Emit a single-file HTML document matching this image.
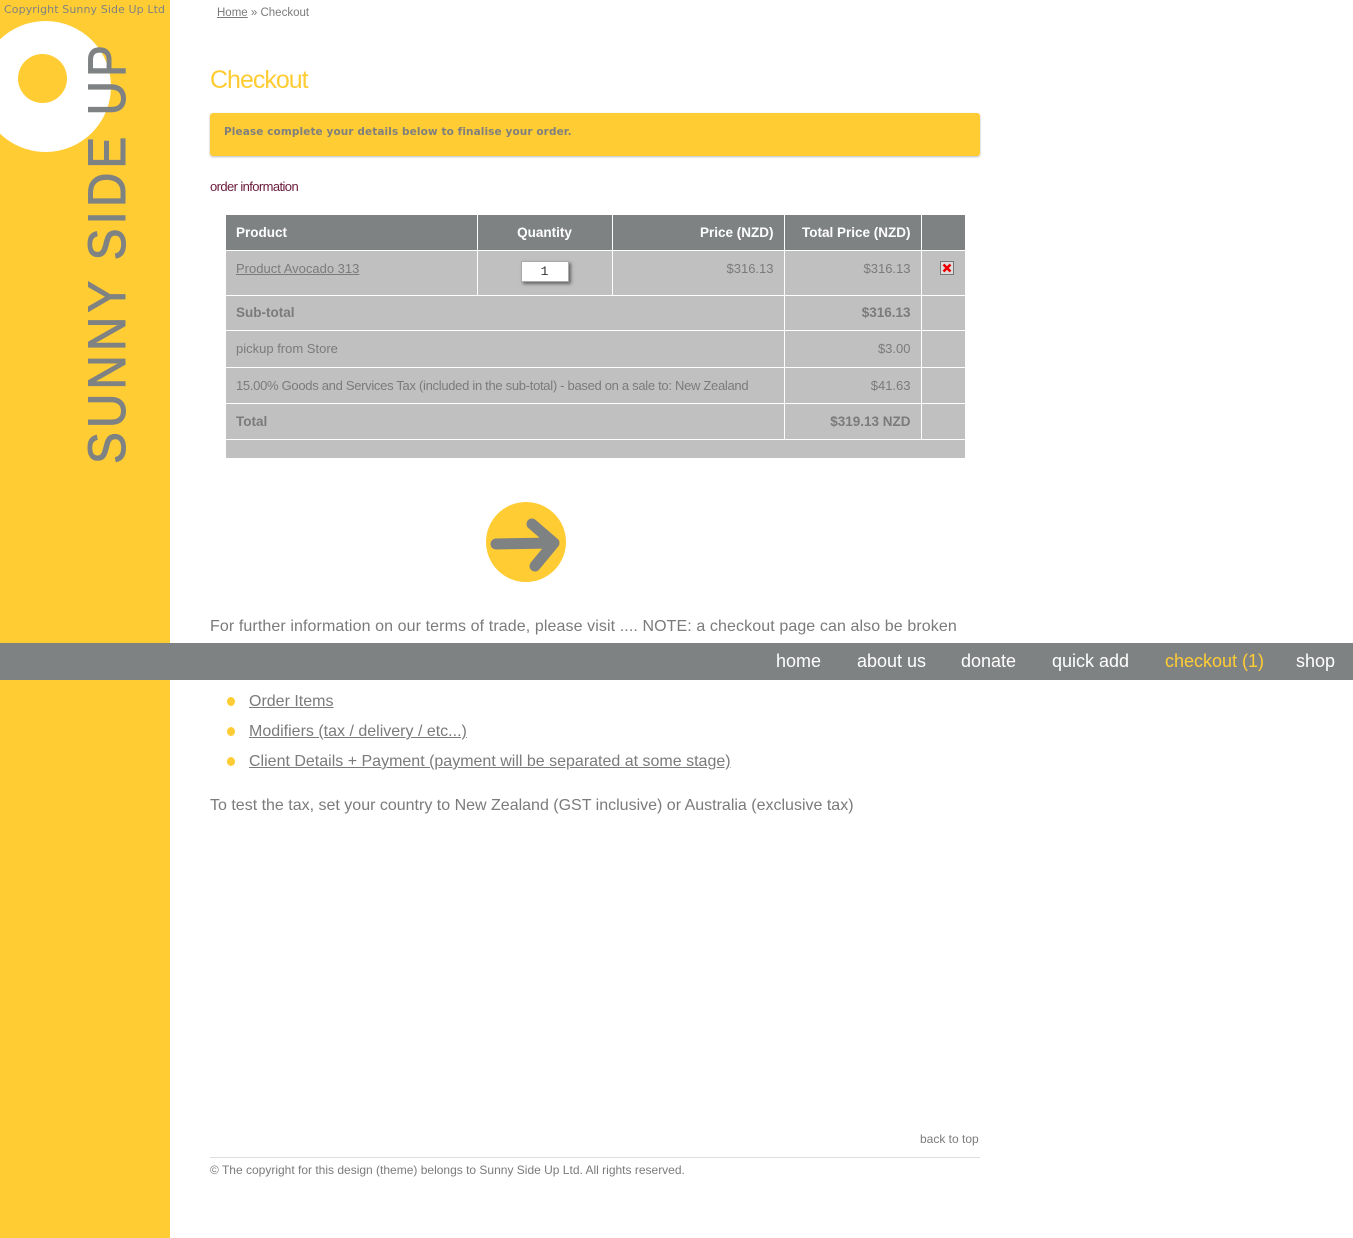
<!DOCTYPE html>
<html><head><meta charset="utf-8"><style>
*{margin:0;padding:0;box-sizing:border-box}
body{width:1353px;height:1238px;position:relative;background:#fff;font-family:"Liberation Sans",sans-serif;color:#7b7b7b;overflow:hidden}
#side{position:absolute;left:0;top:0;width:170px;height:1238px;background:#ffcc33;overflow:hidden}
#copy{position:absolute;left:4px;top:3px;font-family:"DejaVu Sans",sans-serif;font-size:11px;color:#7f8282;white-space:nowrap;letter-spacing:0.1px}
#c1{position:absolute;left:-20px;top:21px;width:131px;height:131px;border-radius:50%;background:#fff}
#c2{position:absolute;left:18px;top:54px;width:49px;height:49px;border-radius:50%;background:#ffcc33}
#logo{position:absolute;left:81px;top:464px;transform:rotate(-90deg) scaleX(0.9);transform-origin:0 0;font-family:"Liberation Sans",sans-serif;font-size:53px;color:#7f8282;white-space:nowrap;letter-spacing:4.5px;line-height:53px;-webkit-text-stroke:1px #7f8282}
#nav{position:absolute;left:0;top:643px;width:1353px;height:37px;background:#7f8282}
#nav span{position:absolute;top:8px;font-size:18px;color:#fff;white-space:nowrap}
a{color:#7b7b7b}
.bc{position:absolute;left:217px;top:7px;font-size:11.5px}
h1{position:absolute;left:210px;top:66px;font-size:25px;color:#ffcc33;font-weight:normal;letter-spacing:-1px}
.msg{position:absolute;left:210px;top:113px;width:770px;height:43px;background:#ffcc33;border-radius:3px;box-shadow:0 1px 2px #bbb;font-family:"DejaVu Sans",sans-serif;font-weight:bold;font-size:10.5px;color:#7f7f7f;padding:13px 14px;letter-spacing:0.1px}
h2{position:absolute;left:210px;top:179px;font-size:13px;color:#6a1a3a;font-weight:normal;letter-spacing:-0.6px}
table{position:absolute;left:226px;top:215px;width:739px;border-collapse:collapse;background:#bfc0bf;font-size:13px;white-space:nowrap;table-layout:fixed}
td,th{border:1px solid #fff;padding:0 10px;overflow:hidden}
th{background:#7f8282;color:#fff;height:35px;font-size:13.5px;text-align:left;border-top:none}
.r{text-align:right}.c{text-align:center}
</style></head><body>
<div id="side"><div id="copy">Copyright Sunny Side Up Ltd</div><div id="c1"></div><div id="c2"></div><div id="logo">SUNNY SIDE UP</div></div>
<div class="bc"><a href="#">Home</a> » Checkout</div>
<h1>Checkout</h1>
<div class="msg">Please complete your details below to finalise your order.</div>
<h2>order information</h2>
<table>
<colgroup><col style="width:251px"><col style="width:135px"><col style="width:172px"><col style="width:137px"><col style="width:44px"></colgroup>
<tr><th style="border-left:none">Product</th><th class="c">Quantity</th><th class="r">Price (NZD)</th><th class="r" style="padding:0 10px 0 0">Total Price (NZD)</th><th style="border-right:none"></th></tr>
<tr style="height:45px"><td style="vertical-align:top;padding-top:10px;border-left:none"><a href="#">Product Avocado 313</a></td><td class="c" style="vertical-align:top;padding-top:10px"><div style="display:inline-block;width:48px;height:21px;background:#fff;border:1px solid #aaa;box-shadow:2px 2px 3px #666;font-family:'Liberation Mono',monospace;font-size:13px;color:#333;line-height:19px">1</div></td><td class="r" style="vertical-align:top;padding-top:10px">$316.13</td><td class="r" style="vertical-align:top;padding-top:10px">$316.13</td><td style="vertical-align:top;padding:10px 0 0 18px;border-right:none"><svg width="16" height="16" viewBox="0 0 16 16"><rect x="0.5" y="0.5" width="13" height="13" fill="#ddd" stroke="#777"/><path d="M3.5 3.5L10.5 10.5M10.5 3.5L3.5 10.5" stroke="#e00" stroke-width="2.6"/></svg></td></tr>
<tr style="height:35px"><td colspan="3" style="border-left:none;font-weight:bold;font-size:13.5px">Sub-total</td><td class="r" style="font-weight:bold;font-size:13.5px">$316.13</td><td style="border-right:none"></td></tr>
<tr style="height:37px"><td colspan="3" style="border-left:none">pickup from Store</td><td class="r">$3.00</td><td style="border-right:none"></td></tr>
<tr style="height:36px"><td colspan="3" style="border-left:none;letter-spacing:-0.3px">15.00% Goods and Services Tax (included in the sub-total) - based on a sale to: New Zealand</td><td class="r">$41.63</td><td style="border-right:none"></td></tr>
<tr style="height:36px"><td colspan="3" style="border-left:none;font-weight:bold;font-size:13.5px">Total</td><td class="r" style="font-weight:bold;font-size:13.5px">$319.13 NZD</td><td style="border-right:none"></td></tr>
<tr style="height:19px"><td colspan="5" style="border:none;border-top:1px solid #fff"></td></tr>
</table>
<svg style="position:absolute;left:486px;top:502px" width="80" height="80" viewBox="0 0 80 80"><circle cx="40" cy="40" r="40" fill="#ffcc33"/><path d="M10 42L68 41M46 22L68 41L49 64" fill="none" stroke="#7f8282" stroke-width="11" stroke-linecap="round" stroke-linejoin="round"/></svg>
<div style="position:absolute;left:210px;top:618px;font-size:16px;white-space:nowrap;letter-spacing:0.1px">For further information on our terms of trade, please visit .... NOTE: a checkout page can also be broken</div>
<div id="nav"><span style="left:776px">home</span><span style="left:857px">about us</span><span style="left:961px">donate</span><span style="left:1052px">quick add</span><span style="left:1165px;color:#ffcc33">checkout (1)</span><span style="left:1296px">shop</span></div>
<div style="position:absolute;left:210px;top:687px;font-size:16px;line-height:30px">
<div style="position:relative;padding-left:39px"><span style="position:absolute;left:17px;top:10px;width:8px;height:9px;border-radius:50%;background:#ffcc33"></span><a href="#">Order Items</a></div>
<div style="position:relative;padding-left:39px"><span style="position:absolute;left:17px;top:10px;width:8px;height:9px;border-radius:50%;background:#ffcc33"></span><a href="#">Modifiers (tax / delivery / etc...)</a></div>
<div style="position:relative;padding-left:39px"><span style="position:absolute;left:17px;top:10px;width:8px;height:9px;border-radius:50%;background:#ffcc33"></span><a href="#">Client Details + Payment (payment will be separated at some stage)</a></div>
</div>
<div style="position:absolute;left:210px;top:797px;font-size:16px;white-space:nowrap">To test the tax, set your country to New Zealand (GST inclusive) or Australia (exclusive tax)</div>
<div style="position:absolute;left:920px;top:1132px;font-size:12px">back to top</div>
<div style="position:absolute;left:210px;top:1157px;width:770px;border-top:1px solid #ddd"></div>
<div style="position:absolute;left:210px;top:1163px;font-size:12px">© The copyright for this design (theme) belongs to Sunny Side Up Ltd. All rights reserved.</div>
</body></html>
